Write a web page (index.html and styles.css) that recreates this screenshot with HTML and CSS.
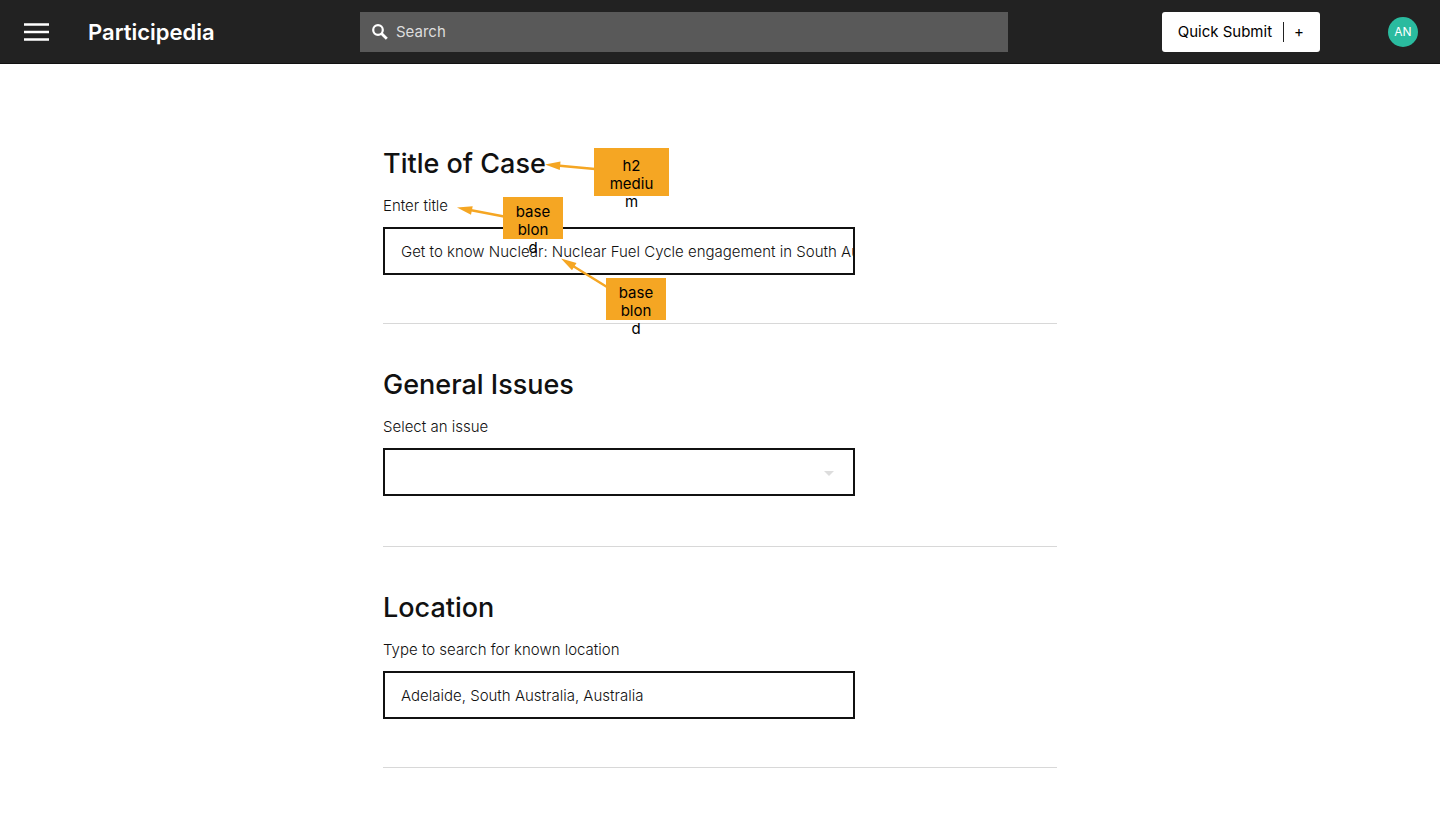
FILE: index.html
```html
<!DOCTYPE html>
<html lang="en">
<head>
<meta charset="utf-8">
<title>Participedia</title>
<link rel="stylesheet" href="styles.css">
</head>
<body>
<header class="header">
  <div class="brand">
    <button class="menu" type="button" aria-label="Menu">
      <svg width="25" height="18" viewBox="0 0 25 18"><path d="M0 1.500h25M0 9h25M0 16.500h25" stroke="#fff" stroke-width="2.700"/></svg>
    </button>
    <a class="logo" href="#">Participedia</a>
  </div>
  <label class="search">
    <svg width="16" height="16" viewBox="0 0 16 16" fill="none" stroke="#fff"><circle cx="6" cy="6" r="4.800" stroke-width="2.200"/><path d="M9.500 9.500l5.300 5.300" stroke-width="2.800"/></svg>
    <input class="search-input" type="search" placeholder="Search" aria-label="Search">
  </label>
  <div class="actions">
    <button class="submit" type="button"><span>Quick Submit</span><span class="plus">+</span></button>
    <a class="avatar" href="#">AN</a>
  </div>
</header>
<main class="page">
  <form class="column">
    <section class="section">
      <h2 class="heading">Title of Case</h2>
      <label class="label" for="title">Enter title</label>
      <input class="field" id="title" type="text" value="Get to know Nuclear: Nuclear Fuel Cycle engagement in South Australia">
    </section>
    <section class="section">
      <h2 class="heading">General Issues</h2>
      <label class="label" for="issue">Select an issue</label>
      <select class="field dropdown" id="issue"><option></option></select>
      <svg class="caret" width="10" height="5" viewBox="0 0 10 5"><path d="M0 0h10L5 5z" fill="#ddd"/></svg>
    </section>
    <section class="section">
      <h2 class="heading">Location</h2>
      <label class="label" for="location">Type to search for known location</label>
      <input class="field" id="location" type="text" value="Adelaide, South Australia, Australia">
    </section>
    <svg class="arrows" width="300" height="240" viewBox="0 0 300 240" fill="#f5a623" stroke="#f5a623">
      <path d="M174 101.500l38 3.500M87 146l34 6.500M190 202l34 21" stroke-width="2.400"/>
      <path d="M162 100.500l15.500-3-.7 8.500zM74 143.500l15.700-1.300-1.700 8.500zM178 194.500l15.500 4.500-4.500 7.300z" stroke="none"/>
    </svg>
    <div class="note note-heading">h2<br>mediu<br>m</div>
    <div class="note note-label">base<br>blon<br>d</div>
    <div class="note note-field">base<br>blon<br>d</div>
  </form>
</main>
</body>
</html>
```
FILE: styles.css
```css
* { box-sizing: border-box; }
body { margin: 0; background: #fff; color: #111; font: 300 15px/24px Inter, "Liberation Sans", sans-serif; }
button, input, select { font: inherit; color: inherit; }
a { color: inherit; text-decoration: none; }

.header {
  display: grid;
  grid-template-columns: 25% 45% 1fr;
  align-items: center;
  height: 64px;
  background: #222;
  border-bottom: 1px solid #111;
  color: #fff;
}
.brand { display: flex; align-items: center; gap: 39px; padding-left: 24px; }
.menu { display: flex; padding: 0; border: 0; background: none; }
.logo { font-size: 22px; font-weight: 600; }
.search { display: flex; align-items: center; gap: 8px; height: 40px; padding: 0 12px; background: #595959; }
.search-input { flex: 1; min-width: 0; padding: 0; border: 0; outline: 0; background: none; font-weight: 400; }
.search-input::placeholder { color: #ddd; opacity: 1; }
.actions { display: flex; align-items: center; justify-content: flex-end; gap: 68px; padding-right: 22px; }
.submit { display: flex; align-items: center; gap: 11px; height: 40px; padding: 0 16px; border: 0; border-radius: 3px; background: #fff; color: #000; font-weight: 400; }
.plus { padding-left: 10px; border-left: 1px solid #222; line-height: 20px; }
.avatar { display: flex; align-items: center; justify-content: center; width: 30px; height: 30px; border-radius: 50%; background: #2abb9f; font-size: 12px; font-weight: 400; }

.page { padding: 39px 16px 0; }
.column { position: relative; max-width: 674px; margin: 0 auto; }
.section { position: relative; padding: 43px 0 48px; border-bottom: 1px solid #d8d8d8; }
.heading { margin: 0 0 12px; font-size: 27px; line-height: 36px; font-weight: 500; }
.label { display: block; margin-bottom: 9px; }
.field { display: block; width: 70%; height: 48px; padding: 0 0 0 16px; border: 2px solid #111; border-radius: 0; background: #fff; outline: 0; }
.dropdown { appearance: none; margin-bottom: 2px; }
.caret { position: absolute; left: 441px; top: 147px; pointer-events: none; }

.arrows { position: absolute; left: 0; top: -39px; pointer-events: none; }
.note { position: absolute; background: #f5a623; color: #000; text-align: center; line-height: 18px; font-weight: 400; }
.note-heading { left: 211px; top: 45px; width: 75px; height: 48px; padding-top: 9px; }
.note-label { left: 120px; top: 94px; width: 60px; height: 42px; padding-top: 6px; }
.note-field { left: 223px; top: 175px; width: 60px; height: 42px; padding-top: 6px; }
```
